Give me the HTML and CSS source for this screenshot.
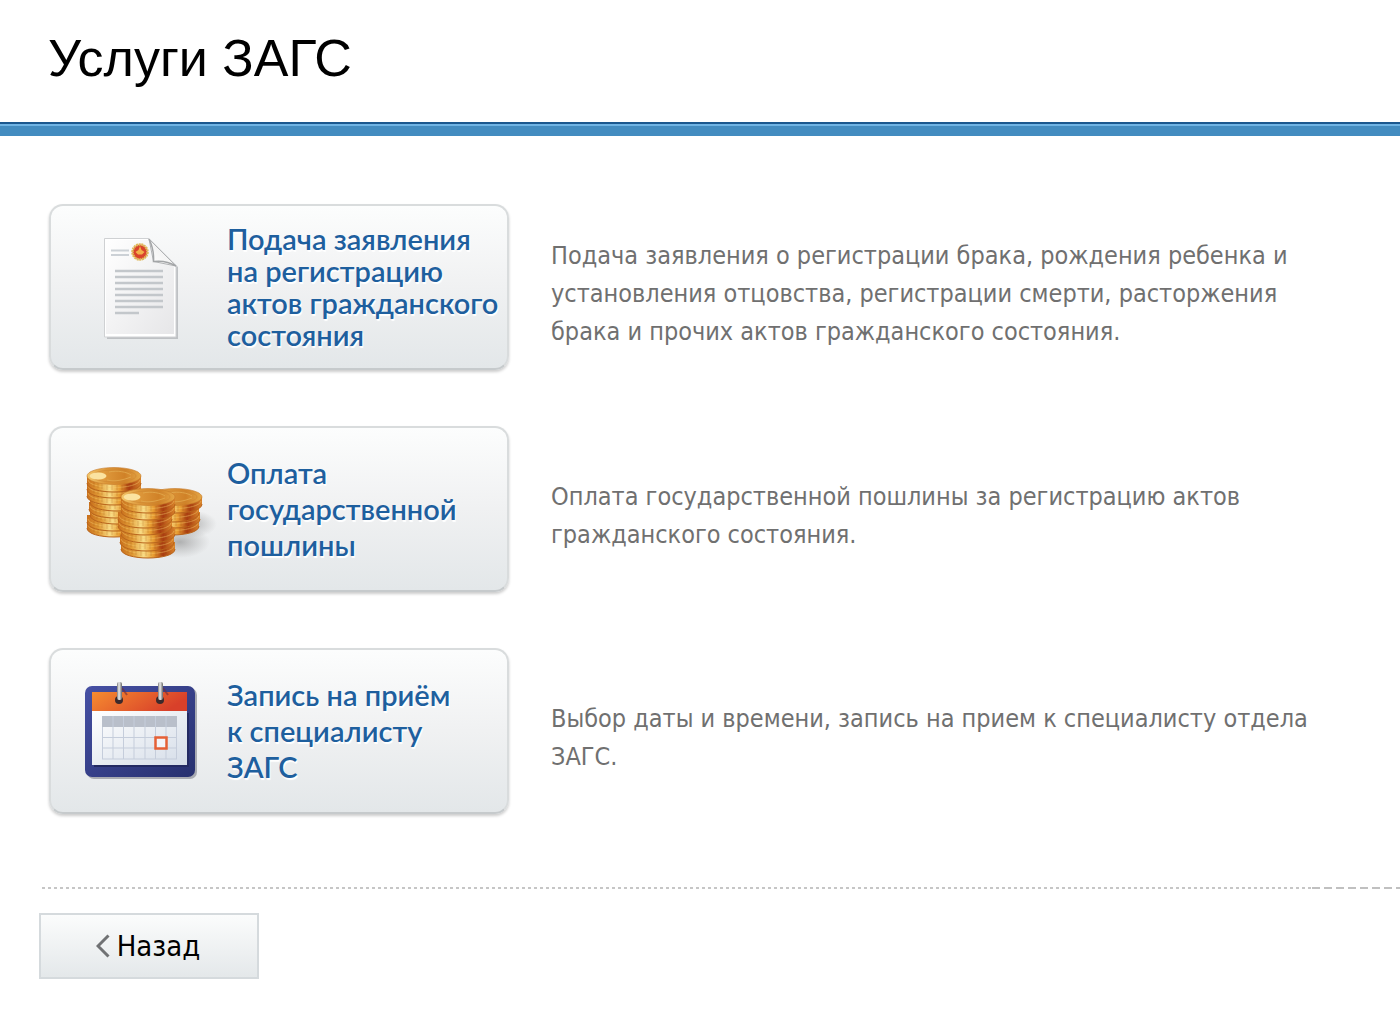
FILE: index.html
```
<!DOCTYPE html>
<html lang="ru">
<head>
    <meta charset="UTF-8">
    <meta name="viewport" content="width=device-width, initial-scale=1.0">
    <title>Услуги ЗАГС</title>
    <link rel="stylesheet" href="styles.css">
</head>
<body>

    <header class="header">
        <h1>Услуги ЗАГС</h1>
    </header>

    <main class="services">
        <!-- Подача заявления -->
        <div class="service">
            <a class="card card-long" href="#application">
                <svg class="icon" viewBox="0 0 140 110" aria-hidden="true">
                    <defs>
                        <linearGradient id="paper" x1="0" y1="0" x2="1" y2="1">
                            <stop offset="0" stop-color="#fff"/>
                            <stop offset="1" stop-color="#e6e6e8"/>
                        </linearGradient>
                        <linearGradient id="fold" x1="0" y1="1" x2="1" y2="0">
                            <stop offset="0" stop-color="#fff"/>
                            <stop offset=".5" stop-color="#f4f4f4"/>
                            <stop offset="1" stop-color="#c4c6c8"/>
                        </linearGradient>
                    </defs>
                    <path d="M27 9h44l27 26v72H27z" fill="#bec1c4"/>
                    <path d="M24.500 6.500H69l27 27V105h-71.500z" fill="#fff" stroke="#cfd1d3"/>
                    <path d="M26 8h43l25 26v68H26z" fill="url(#paper)"/>
                    <path d="M69 7L96 34 73.500 29.500z" fill="url(#fold)" stroke="#b1b3b5" stroke-linejoin="round"/>
                    <path d="M69 7c4 8 5 14 4.500 22.500 8-1 15 0 22.500 4.500" fill="none" stroke="#a3a5a7" stroke-width="1.500"/>
                    <path d="M31 18.500h18M31 23h18" stroke="#ccd1d6" stroke-width="2"/>
                    <path d="M35 39h48M35 45h48M35 51h48M35 57h48M35 63h48M35 69h48M35 75h48M35 81h24" stroke="#c3c7cb" stroke-width="2.500"/>
                    <circle cx="60" cy="20" r="7.500" fill="#d9432c" stroke="#dfb95a" stroke-width="2.500" stroke-dasharray="2 .6"/>
                    <path d="M60 14l1.500 4 3 2-2.500 2.500h-4L55.500 20l3-2z" fill="#f3b04a"/>
                </svg>
                <span class="card-text">Подача заявления<br>на регистрацию<br>актов гражданского<br>состояния</span>
            </a>
            <p class="description">Подача заявления о регистрации брака, рождения ребенка и установления отцовства, регистрации смерти, расторжения брака и прочих актов гражданского состояния.</p>
        </div>

        <!-- Оплата пошлины -->
        <div class="service">
            <a class="card" href="#payment">
                <svg class="icon" viewBox="0 0 140 110" aria-hidden="true">
                    <defs>
                        <linearGradient id="gold">
                            <stop offset="0" stop-color="#c86f1c"/>
                            <stop offset=".22" stop-color="#e09a35"/>
                            <stop offset=".42" stop-color="#f8dc86"/>
                            <stop offset=".6" stop-color="#e79c31"/>
                            <stop offset=".78" stop-color="#a83c10"/>
                            <stop offset="1" stop-color="#d8832a"/>
                        </linearGradient>
                        <linearGradient id="goldTop">
                            <stop offset="0" stop-color="#f3c76a"/>
                            <stop offset=".35" stop-color="#dd973a"/>
                            <stop offset=".7" stop-color="#d08127"/>
                            <stop offset="1" stop-color="#e5a747"/>
                        </linearGradient>
                        <radialGradient id="shade">
                            <stop offset="0" stop-color="#888" stop-opacity=".6"/>
                            <stop offset="1" stop-color="#999" stop-opacity="0"/>
                        </radialGradient>
                        <g id="coin">
                            <path d="M0 0v7c0 12 54 12 54 0V0z" fill="url(#gold)"/>
                            <path d="M0 7c0 12 54 12 54 0" fill="none" stroke="#b8641c" stroke-width="1"/>
                            <path d="M1 4c2 10 50 10 52 0" fill="none" stroke="#f6ca6c" stroke-width=".8" opacity=".6"/>
                            <path d="M7 6v5M11 7v5M15 8v5M20 9v5M25 9v5M30 9v5M35 9v5M40 8v5M45 7v5" stroke="#8f4309" stroke-width=".6" opacity=".35"/>
                        </g>
                        <g id="coinTop">
                            <ellipse cx="27" cy="0" rx="27" ry="8.500" fill="url(#goldTop)" stroke="#c67a2a" stroke-width=".6"/>
                            <ellipse cx="27" cy="0" rx="22" ry="6" fill="none" stroke="#cc8732" stroke-width=".6"/>
                            <path d="M22-4c8-2 18 0 22 3M20 4c8 2 16 0 24-3" fill="none" stroke="#e2ab50" stroke-width=".8"/>
                            <ellipse cx="11" cy="0" rx="8.500" ry="3.500" fill="#fbe3a0"/>
                        </g>
                    </defs>
                    <ellipse cx="100" cy="88" rx="30" ry="16" fill="url(#shade)"/>
                    <ellipse cx="110" cy="70" rx="27" ry="14" fill="url(#shade)"/>
                    <use href="#coin" x="7" y="67"/>
                    <use href="#coin" x="7" y="61"/>
                    <use href="#coin" x="10" y="54"/>
                    <use href="#coin" x="9" y="48"/>
                    <use href="#coin" x="10" y="41"/>
                    <use href="#coin" x="7" y="35"/>
                    <use href="#coin" x="7" y="28"/>
                    <use href="#coin" x="7" y="22"/>
                    <use href="#coinTop" x="7" y="22"/>
                    <use href="#coin" x="65" y="65"/>
                    <use href="#coin" x="66" y="58"/>
                    <use href="#coin" x="65" y="52"/>
                    <use href="#coin" x="68" y="43"/>
                    <use href="#coinTop" x="68" y="43"/>
                    <use href="#coin" x="41" y="88"/>
                    <use href="#coin" x="40" y="81"/>
                    <use href="#coin" x="41" y="73"/>
                    <use href="#coin" x="38" y="65"/>
                    <use href="#coin" x="38" y="58"/>
                    <use href="#coin" x="41" y="50"/>
                    <use href="#coin" x="41" y="43"/>
                    <use href="#coinTop" x="41" y="43"/>
                </svg>
                <span class="card-text">Оплата<br>государственной<br>пошлины</span>
            </a>
            <p class="description">Оплата государственной пошлины за регистрацию актов гражданского состояния.</p>
        </div>

        <!-- Запись на приём -->
        <div class="service">
            <a class="card" href="#appointment">
                <svg class="icon" viewBox="0 0 140 110" aria-hidden="true">
                    <defs>
                        <linearGradient id="cover" x1="0" y1="0" x2="1" y2="1">
                            <stop offset="0" stop-color="#4650a4"/>
                            <stop offset="1" stop-color="#27306f"/>
                        </linearGradient>
                        <linearGradient id="band" x1="0" y1="0" x2="1" y2=".3">
                            <stop offset="0" stop-color="#f68c30"/>
                            <stop offset="1" stop-color="#d8402a"/>
                        </linearGradient>
                        <linearGradient id="sheet" x1="0" y1="0" x2="1" y2="1">
                            <stop offset="0" stop-color="#fff"/>
                            <stop offset="1" stop-color="#d5dde8"/>
                        </linearGradient>
                        <linearGradient id="ring">
                            <stop offset="0" stop-color="#777"/>
                            <stop offset=".4" stop-color="#eee"/>
                            <stop offset="1" stop-color="#666"/>
                        </linearGradient>
                    </defs>
                    <rect x="7" y="12" width="110" height="91" rx="7" fill="#a9abb2"/>
                    <rect x="5" y="10" width="110" height="91" rx="7" fill="url(#cover)"/>
                    <path d="M14 37h95v54H14z" fill="#232a62"/>
                    <path d="M12 16h95v19H12z" fill="url(#band)"/>
                    <path d="M12 35h95v54H12z" fill="url(#sheet)"/>
                    <path d="M22 40h75v11H22z" fill="#b9bfca"/>
                    <path d="M22.500 51v32M33 40v43M43.500 40v43M54 40v43M65 40v43M75.500 40v43M86 40v43M96.500 51v32M22 61.500h75M22 72h75M22 83h75" fill="none" stroke="#c5cddb"/>
                    <rect x="75.500" y="61.500" width="11" height="11" fill="#f3f4f8" stroke="#e56036" stroke-width="2.500"/>
                    <circle cx="39" cy="24" r="4" fill="#3c2a2c"/>
                    <circle cx="80" cy="24" r="4" fill="#3c2a2c"/>
                    <path d="M42 12l5 7M83 12l5 7" stroke="#722c36" stroke-width="2" opacity=".6"/>
                    <rect x="37" y="6" width="5" height="18" rx="2" fill="url(#ring)"/>
                    <rect x="78" y="6" width="5" height="18" rx="2" fill="url(#ring)"/>
                </svg>
                <span class="card-text">Запись на приём<br>к специалисту<br>ЗАГС</span>
            </a>
            <p class="description">Выбор даты и времени, запись на прием к специалисту отдела ЗАГС.</p>
        </div>
    </main>

    <footer class="footer">
        <button class="back-btn" type="button">
            <svg class="arrow" viewBox="0 0 14 24" aria-hidden="true">
                <path d="M12.500 1.500L2 12l10.500 10.500" fill="none" stroke="#707274" stroke-width="3"/>
            </svg>
            Назад
        </button>
    </footer>

</body>
</html>
```
FILE: styles.css
```
* {
    box-sizing: border-box;
}

body {
    margin: 0;
    background-color: #fff;
    font-family: "DejaVu Sans Condensed", "Noto Sans", sans-serif;
}

/* Шапка */
.header {
    padding: 24px 48px 34px;
    border-bottom: 10px solid #438cc0;
    box-shadow: inset 0 -2px #70b4e4, inset 0 -4px #1b588f;
}

.header h1 {
    margin: 0;
    font-family: "Liberation Sans", Arial, sans-serif;
    font-size: 52px;
    font-weight: 300;
    line-height: 68px;
    color: #000;
}

/* Список услуг */
.services {
    display: flex;
    flex-direction: column;
    gap: 56px;
    padding: 68px 70px 73px 49px;
}

.service {
    display: flex;
    align-items: center;
    gap: 42px;
}

.card {
    display: flex;
    align-items: center;
    flex: 0 0 460px;
    min-height: 166px;
    padding-left: 29px;
    border: 2px solid #d9dcdd;
    border-bottom-color: #c6cacc;
    border-radius: 14px;
    background: linear-gradient(to bottom, #fcfdfd, #f0f1f2 50%, #e3e7e9);
    box-shadow: 0 2px 3px rgba(0, 0, 0, 0.2);
    text-decoration: none;
}

.card:hover {
    border-color: #b5babd;
}

.icon {
    flex: none;
    width: 140px;
    height: 110px;
}

.card-text {
    margin-left: 7px;
    font-family: Lato, sans-serif;
    font-size: 29px;
    font-weight: 600;
    line-height: 36px;
    color: #1e5f9e;
    text-shadow: 1px 2px 1px #fff;
    white-space: nowrap;
}

.card-long .card-text {
    line-height: 32px;
}

.description {
    flex: 1;
    margin: 0;
    padding-top: 14px;
    font-size: 25px;
    line-height: 38px;
    color: #707070;
}

/* Низ страницы */
.footer {
    margin-left: 39px;
    padding: 26px 0 31px;
    background-image:
        repeating-linear-gradient(to right, #c0c0c0 0 8px, transparent 8px 12px),
        repeating-linear-gradient(to right, transparent 0 3px, #c6c6c6 3px 6px);
    background-position: right top, left top;
    background-size: 88px 2px, calc(100% - 88px) 2px;
    background-repeat: no-repeat;
}

.back-btn {
    display: flex;
    align-items: center;
    justify-content: center;
    gap: 7px;
    width: 220px;
    height: 66px;
    padding: 0 2px 0 0;
    border: 2px solid #d5dadd;
    background: linear-gradient(to bottom, #fbfcfc, #e4e8ea);
    font-family: inherit;
    font-size: 29px;
    color: #000;
    cursor: pointer;
}

.arrow {
    width: 14px;
    height: 24px;
}
```
